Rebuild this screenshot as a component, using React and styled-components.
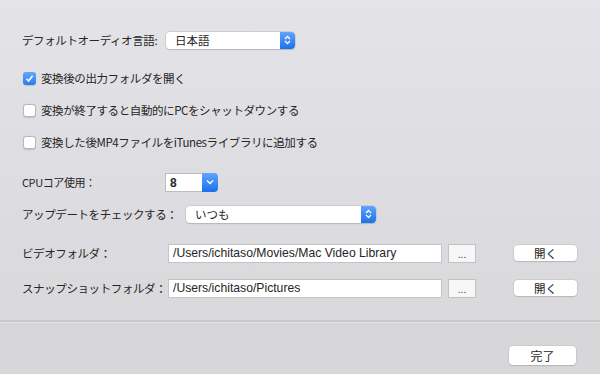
import React, { useState } from "react";
import styled, { createGlobalStyle } from "styled-components";

const GlobalStyle = createGlobalStyle`
  html, body {
    margin: 0;
    padding: 0;
  }
  body {
    font-family: "Noto Sans CJK JP", "Liberation Sans", sans-serif;
    color: #262626;
  }
`;

const Stepper = () => (
  <svg width="7" height="10" viewBox="0 0 7 10">
    <path d="M1 4 L3.5 1.5 L6 4" fill="none" stroke="#fff" strokeWidth="1.3" />
    <path d="M1 6 L3.5 8.5 L6 6" fill="none" stroke="#fff" strokeWidth="1.3" />
  </svg>
);

const Chevron = () => (
  <svg width="8" height="6" viewBox="0 0 8 6">
    <path d="M1 1.5 L4 4.5 L7 1.5" fill="none" stroke="#fff" strokeWidth="1.4" />
  </svg>
);

const Check = () => (
  <svg width="9" height="9" viewBox="0 0 9 9">
    <path d="M1.5 4.8 L3.6 7 L7.6 1.8" fill="none" stroke="#fff" strokeWidth="1.6" />
  </svg>
);

const App = () => {
  const [checks, setChecks] = useState([true, false, false]);

  const toggle = (i) => {
    const next = [...checks];
    next[i] = !next[i];
    setChecks(next);
  };

  const options = [
    "変換後の出力フォルダを開く",
    "変換が終了すると自動的にPCをシャットダウンする",
    "変換した後MP4ファイルをiTunesライブラリに追加する",
  ];

  return (
    <>
      <GlobalStyle />
      <Window>
        <Content>
          <Row $mt={30}>
            <Label $w={144}>デフォルトオーディオ言語:</Label>
            <PopUp $w={129}>
              <PopText>日本語</PopText>
              <PopArrow>
                <Stepper />
              </PopArrow>
            </PopUp>
          </Row>

          {options.map((text, i) => (
            <CheckRow key={i} $mt={i === 0 ? 18 : 12} onClick={() => toggle(i)}>
              <Box $on={checks[i]}>{checks[i] && <Check />}</Box>
              <CheckLabel>{text}</CheckLabel>
            </CheckRow>
          ))}

          <Row $mt={20}>
            <Label $w={143} $small>CPUコア使用：</Label>
            <Combo>
              <ComboField>8</ComboField>
              <ComboButton>
                <Chevron />
              </ComboButton>
            </Combo>
          </Row>

          <Row $mt={12}>
            <Label $w={164}>アップデートをチェックする：</Label>
            <PopUp $w={190}>
              <PopText>いつも</PopText>
              <PopArrow>
                <Stepper />
              </PopArrow>
            </PopUp>
          </Row>

          <Row $mt={19}>
            <Label $w={146}>ビデオフォルダ：</Label>
            <PathField>/Users/ichitaso/Movies/Mac Video Library</PathField>
            <BrowseButton>...</BrowseButton>
            <OpenButton>開く</OpenButton>
          </Row>

          <Row $mt={15}>
            <Label $w={146}>スナップショットフォルダ：</Label>
            <PathField>/Users/ichitaso/Pictures</PathField>
            <BrowseButton>...</BrowseButton>
            <OpenButton>開く</OpenButton>
          </Row>
        </Content>

        <Footer>
          <DoneButton>完了</DoneButton>
        </Footer>
      </Window>
    </>
  );
};

export default App;

const Window = styled.div`
  width: 600px;
  height: 374px;
  display: flex;
  flex-direction: column;
  background: linear-gradient(180deg, #e4e3e7 0%, #dcdbdf 60%, #d8d8da 100%);
  overflow: hidden;
`;

const Content = styled.div`
  display: flex;
  flex-direction: column;
  padding-left: 22px;
  height: 322px;
  box-sizing: border-box;
  border-bottom: 2px solid #c9c9cb;
`;

const Row = styled.div`
  display: flex;
  align-items: center;
  height: 20px;
  margin-top: ${(p) => p.$mt}px;
`;

const Label = styled.div`
  width: ${(p) => p.$w}px;
  flex-shrink: 0;
  font-size: ${(p) => (p.$small ? 11 : 11.5)}px;
  white-space: nowrap;
  letter-spacing: -0.4px;
`;

const PopUp = styled.div`
  width: ${(p) => p.$w}px;
  height: 17px;
  display: flex;
  align-items: center;
  background: #fff;
  border-radius: 4px;
  box-shadow: 0 0 0 0.5px #b9b9bc, 0 1px 1px rgba(0, 0, 0, 0.18);
  overflow: hidden;
`;

const PopText = styled.div`
  flex: 1;
  padding-left: 9px;
  font-size: 11.5px;
`;

const PopArrow = styled.div`
  width: 15px;
  height: 100%;
  display: flex;
  align-items: center;
  justify-content: center;
  background: linear-gradient(180deg, #5ea6fb 0%, #1c70eb 100%);
`;

const CheckRow = styled.div`
  display: flex;
  align-items: center;
  height: 20px;
  margin-top: ${(p) => p.$mt}px;
  padding-left: 1px;
  cursor: default;
`;

const Box = styled.div`
  width: 13px;
  height: 13px;
  box-sizing: border-box;
  border-radius: 3px;
  display: flex;
  align-items: center;
  justify-content: center;
  background: ${(p) =>
    p.$on ? "linear-gradient(180deg, #62a8fb 0%, #2b7cf0 100%)" : "#fff"};
  border: ${(p) => (p.$on ? "none" : "1px solid #b8b8bb")};
  box-shadow: 0 0.5px 1px rgba(0, 0, 0, 0.15);
`;

const CheckLabel = styled.span`
  margin-left: 5px;
  font-size: 11.5px;
  letter-spacing: -0.4px;
`;

const Combo = styled.div`
  display: flex;
  height: 19px;
`;

const ComboField = styled.div`
  width: 37px;
  box-sizing: border-box;
  background: #fff;
  border: 1px solid #bdbdc0;
  border-right: none;
  font-family: "Liberation Sans", sans-serif;
  font-weight: bold;
  font-size: 12px;
  padding-left: 4px;
  line-height: 18px;
`;

const ComboButton = styled.div`
  width: 16px;
  display: flex;
  align-items: center;
  justify-content: center;
  background: linear-gradient(180deg, #5ea6fb 0%, #1c70eb 100%);
  border-radius: 0 4px 4px 0;
`;

const PathField = styled.div`
  width: 274px;
  height: 19px;
  box-sizing: border-box;
  background: #fff;
  border: 1px solid #c4c4c7;
  padding-left: 4px;
  font-family: "Liberation Sans", sans-serif;
  font-size: 12.2px;
  line-height: 17px;
  white-space: nowrap;
  overflow: hidden;
`;

const BrowseButton = styled.div`
  width: 28px;
  height: 19px;
  box-sizing: border-box;
  margin-left: 6px;
  background: #f7f7f8;
  border: 1px solid #c2c2c5;
  font-family: "Liberation Sans", sans-serif;
  font-size: 10px;
  color: #333;
  text-align: center;
  line-height: 19px;
`;

const OpenButton = styled.div`
  width: 63px;
  height: 16px;
  margin-left: 38px;
  background: #fff;
  border-radius: 4px;
  box-shadow: 0 0 0 0.5px #bdbdc0, 0 1px 1px rgba(0, 0, 0, 0.18);
  font-size: 11.5px;
  text-align: center;
  line-height: 16px;
`;

const Footer = styled.div`
  flex: 1;
  display: flex;
  justify-content: flex-end;
  align-items: flex-start;
  padding: 23px 24px 0 0;
  background: #d7d7d9;
  border-top: 1px solid #e0e0e2;
`;

const DoneButton = styled.div`
  width: 67px;
  height: 19px;
  background: #fff;
  border-radius: 4px;
  box-shadow: 0 0 0 0.5px #bdbdc0, 0 1px 1px rgba(0, 0, 0, 0.18);
  font-size: 12px;
  text-align: center;
  line-height: 19px;
`;
